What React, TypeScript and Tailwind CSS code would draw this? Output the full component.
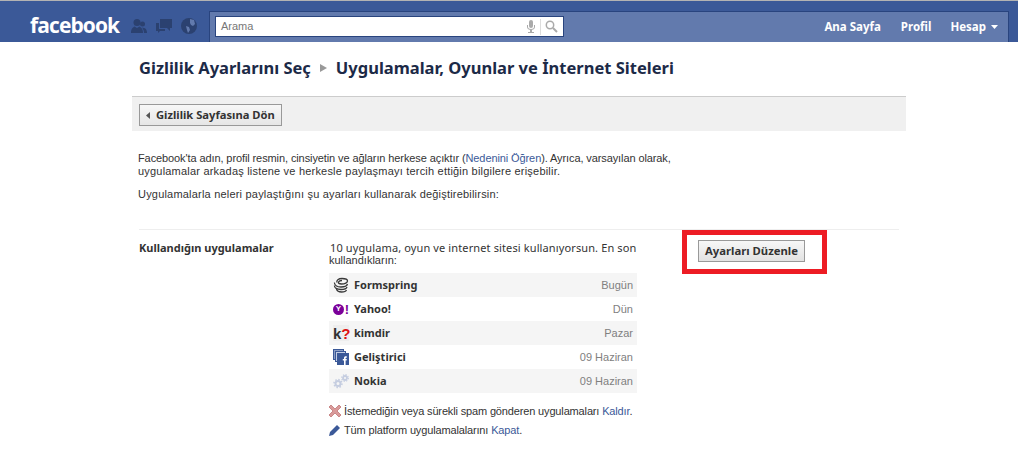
const apps = [
  { name: 'Formspring', when: 'Bugün' },
  { name: 'Yahoo!', when: 'Dün' },
  { name: 'kimdir', when: 'Pazar' },
  { name: 'Geliştirici', when: '09 Haziran' },
  { name: 'Nokia', when: '09 Haziran' },
];

const AppIcon = ({ name }: { name: string }) => {
  if (name === 'Formspring') {
    return (
      <svg width="16" height="16" viewBox="0 0 16 16" fill="none" stroke="#3a3a3a" strokeWidth="1.300">
        <path d="M4 5.500c-1-2 1.500-4 5-4 3 0 5.500 1 5.500 2.500S12 7 8.500 7C6 7 5 6 5.500 5c.5-1 2-1.500 3.500-1.500" />
        <path d="M1.500 5.500c-.5 2.500 2.500 4.500 6.500 4.500 3.500 0 6-1 6.500-3" />
        <path d="M1.500 8.500c-.5 2.500 2.500 4 6.500 4 3 0 5.500-.8 6-2.500" />
        <path d="M3.500 12c.5 2 2.500 3 5 3 2.500 0 4.500-.7 5-2" />
      </svg>
    );
  }
  if (name === 'Yahoo!') {
    return (
      <div className="flex items-center w-4 h-4">
        <div className="w-[12px] h-[11px] rounded-full bg-[#7b0099] flex items-center justify-center text-white text-[8px] leading-none font-bold">Y</div>
        <div className="text-[#7b0099] text-[13px] leading-none font-bold ml-[1px]">!</div>
      </div>
    );
  }
  if (name === 'kimdir') {
    return (
      <div className="flex items-center w-4 h-4 bg-[#eeeeee] font-bold text-[15px] leading-none">
        <span className="text-[#333333]">k</span>
        <span className="text-[#dd1111]">?</span>
      </div>
    );
  }
  if (name === 'Geliştirici') {
    return (
      <svg width="16" height="16" viewBox="0 0 16 16">
        <rect x="0.500" y="0.500" width="10" height="10" fill="#8b9dc3" stroke="#3b5998" />
        <rect x="2.500" y="2.500" width="10" height="10" fill="#c3cde3" stroke="#3b5998" />
        <rect x="4" y="4" width="12" height="12" fill="#3b5998" />
        <path d="M11 16v-4.500h-1.200V10H11V9c0-1.200.7-1.800 1.800-1.800h1v1.500h-.7c-.4 0-.5.2-.5.6V10h1.200l-.2 1.500h-1V16z" fill="#fff" />
      </svg>
    );
  }
  return (
    <svg width="16" height="16" viewBox="0 0 16 16" fill="none" stroke="#c5cde0">
      <circle cx="5" cy="10.500" r="2.500" strokeWidth="2" />
      <circle cx="5" cy="10.500" r="4" strokeWidth="1.500" strokeDasharray="1.500 1.600" />
      <circle cx="12" cy="5" r="2" strokeWidth="1.800" />
      <circle cx="12" cy="5" r="3.300" strokeWidth="1.300" strokeDasharray="1.300 1.300" />
    </svg>
  );
};

export default function App() {
  return (
    <div className="w-[1018px] h-[453px] overflow-hidden bg-white font-['Liberation_Sans',sans-serif] text-[11px] text-[#333333]">
      <div className="h-[42px] bg-[#3b5998] border-t border-[#b3b3b3] flex">
        <div className="w-[209px] shrink-0 flex items-start pt-[10px] pl-[30px]">
          <span className="font-['Open_Sans',sans-serif] font-bold text-white text-[21px] leading-[28px] tracking-[-0.9px]">facebook</span>
          <div className="flex gap-[9px] pt-[7px] ml-[12px] items-center">
            <svg width="16" height="16" viewBox="0 0 16 16" fill="#2b4170">
              <circle cx="6" cy="4.500" r="3.500" />
              <path d="M0 15c0-4 1.500-5.500 3.500-6.500L6 10l2.500-1.500c2 1 3.500 2.500 3.500 6.500z" />
              <circle cx="11.500" cy="6" r="2.500" />
              <path d="M11 9.500c3 .2 5 1.500 5 5.500h-3c0-2-.8-4-2-5.500z" />
            </svg>
            <svg width="16" height="15" viewBox="0 0 16 15" fill="#2b4170">
              <path d="M4 0h12v9h-2v3l-3-3H4z" />
              <path d="M0 4h3v6h6v2H4l-2 2v-2H0z" />
            </svg>
            <svg width="16" height="16" viewBox="0 0 16 16">
              <circle cx="8" cy="8" r="8" fill="#2b4170" />
              <path d="M9 1l4 1 1 4-2 2-2-1-1-2zM5 8l3 1 1 3-2 3-1-3z" fill="#627aad" />
            </svg>
          </div>
        </div>
        <div className="flex-1 mr-[9px] mt-[10px] bg-[#627aad] border-t border-x border-[#29447e] flex items-start pt-[4px] pl-[5px]">
          <div className="w-[349px] h-[21px] bg-white border border-[#29447e] flex items-center pl-[5px] pr-[5px]">
            <span className="flex-1 text-[#777777] text-[11px]">Arama</span>
            <svg width="10" height="14" viewBox="0 0 10 14" fill="#aaaaaa">
              <rect x="3" y="0" width="4" height="8" rx="2" />
              <path d="M1 5v2c0 2 2 3 4 3s4-1 4-3V5H8v2c0 1-1 2-3 2S2 8 2 7V5zM4 10h2v2h2v1H2v-1h2z" />
            </svg>
            <div className="w-px h-[16px] bg-[#dddddd] mx-[4px]" />
            <svg width="13" height="13" viewBox="0 0 13 13" fill="none" stroke="#aaaaaa" strokeWidth="1.500">
              <circle cx="5" cy="5" r="3.700" />
              <path d="M8 8l4 4" strokeWidth="2" />
            </svg>
          </div>
          <div className="ml-auto flex items-center h-[22px] font-['Noto_Sans',sans-serif] font-bold text-white text-[11.5px] pr-[10px]">
            <span>Ana Sayfa</span>
            <span className="ml-[20px]">Profil</span>
            <span className="ml-[19px]">Hesap</span>
            <svg className="ml-[5px]" width="7" height="4" viewBox="0 0 7 4" fill="#ffffff">
              <path d="M0 0h7L3.500 4z" />
            </svg>
          </div>
        </div>
      </div>

      <div className="ml-[132px] w-[774px]">
        <div className="h-[54px] pl-[7px] pb-[2px] flex items-center font-['Noto_Sans',sans-serif] font-bold text-[16.5px] text-[#1c2a47] leading-[22px]">
          <span>Gizlilik Ayarlarını Seç</span>
          <svg className="mx-[9px]" width="7" height="8" viewBox="0 0 7 8" fill="#999999">
            <path d="M0 0l7 4-7 4z" />
          </svg>
          <span>Uygulamalar, Oyunlar ve İnternet Siteleri</span>
        </div>
        <div className="h-[35px] bg-[#f0f0f0] border-t border-[#cccccc] pl-[7px] pt-[7px]">
          <div className="inline-flex items-center h-[22px] pl-[6px] gap-[6px] w-[143px] bg-linear-to-b from-[#f7f7f7] to-[#e6e6e6] border border-[#999999] font-['Noto_Sans',sans-serif] font-bold text-[11.2px] text-[#333333]">
            <svg width="4" height="7" viewBox="0 0 4 7" fill="#555555">
              <path d="M4 0v7L0 3.500z" />
            </svg>
            <span>Gizlilik Sayfasına Dön</span>
          </div>
        </div>

        <div className="pl-[6px] pt-[21px] leading-[13px]">
          <p className="whitespace-nowrap">
            <span className="block tracking-[-0.1px]">Facebook&apos;ta adın, profil resmin, cinsiyetin ve ağların herkese açıktır (<span className="text-[#3b5998]">Nedenini Öğren</span>). Ayrıca, varsayılan olarak,</span>
            <span className="block tracking-[0.2px]">uygulamalar arkadaş listene ve herkesle paylaşmayı tercih ettiğin bilgilere erişebilir.</span>
          </p>
          <p className="mt-[10px] tracking-[0.2px]">Uygulamalarla neleri paylaştığını şu ayarları kullanarak değiştirebilirsin:</p>
        </div>

        <div className="ml-[7px] w-[760px] mt-[28px] border-t border-[#eeeeee] flex">
          <div className="w-[190px] pt-[11px] font-['Noto_Sans',sans-serif] font-bold leading-[14px]">Kullandığın uygulamalar</div>
          <div className="w-[308px] pt-[11px]">
            <p className="leading-[13px] whitespace-nowrap">
              <span className="block font-['Noto_Sans',sans-serif] pl-[1px] tracking-[0.12px]">10 uygulama, oyun ve internet sitesi kullanıyorsun. En son</span>
              <span className="block">kullandıkların:</span>
            </p>
            <div className="mt-[6px]">
              {apps.map((app, i) => (
                <div key={app.name} className={`h-[24px] flex items-center pl-[4px] pr-[4px] ${i % 2 === 0 ? 'bg-[#f5f5f5]' : 'bg-white'}`}>
                  <div className="w-[16px] h-[16px] mr-[5px] flex items-center justify-center"><AppIcon name={app.name} /></div>
                  <span className="font-['Noto_Sans',sans-serif] font-bold flex-1 text-[#333333]">{app.name}</span>
                  <span className="text-[#808080]">{app.when}</span>
                </div>
              ))}
            </div>
            <div className="mt-[11px] flex items-center h-[14px] whitespace-nowrap tracking-[-0.15px]">
              <svg className="mr-[3px]" width="12" height="12" viewBox="0 0 12 12">
                <path d="M2 0l4 4 4-4 2 2-4 4 4 4-2 2-4-4-4 4-2-2 4-4-4-4z" fill="#d99a9a" stroke="#b45a5a" strokeWidth="0.600" />
              </svg>
              <span>İstemediğin veya sürekli spam gönderen uygulamaları <span className="text-[#3b5998]">Kaldır</span>.</span>
            </div>
            <div className="mt-[5px] flex items-center h-[14px] whitespace-nowrap tracking-[-0.15px]">
              <svg className="mr-[4px]" width="11" height="11" viewBox="0 0 11 11" fill="#3b5998">
                <path d="M8 0l3 3-7 7-4 1 1-4z" />
              </svg>
              <span>Tüm platform uygulamalalarını <span className="text-[#3b5998]">Kapat</span>.</span>
            </div>
          </div>
          <div className="ml-[45px] w-[145px] h-[44px] border-[5px] border-[#ed1c24] flex items-start pt-[5px] pl-[11px] self-start">
            <div className="w-[107px] h-[22px] flex items-center justify-center bg-linear-to-b from-[#f7f7f7] to-[#e2e2e2] border border-[#999999] font-['Noto_Sans',sans-serif] font-bold text-[11.3px] text-[#333333]">Ayarları Düzenle</div>
          </div>
        </div>
      </div>
    </div>
  );
}
